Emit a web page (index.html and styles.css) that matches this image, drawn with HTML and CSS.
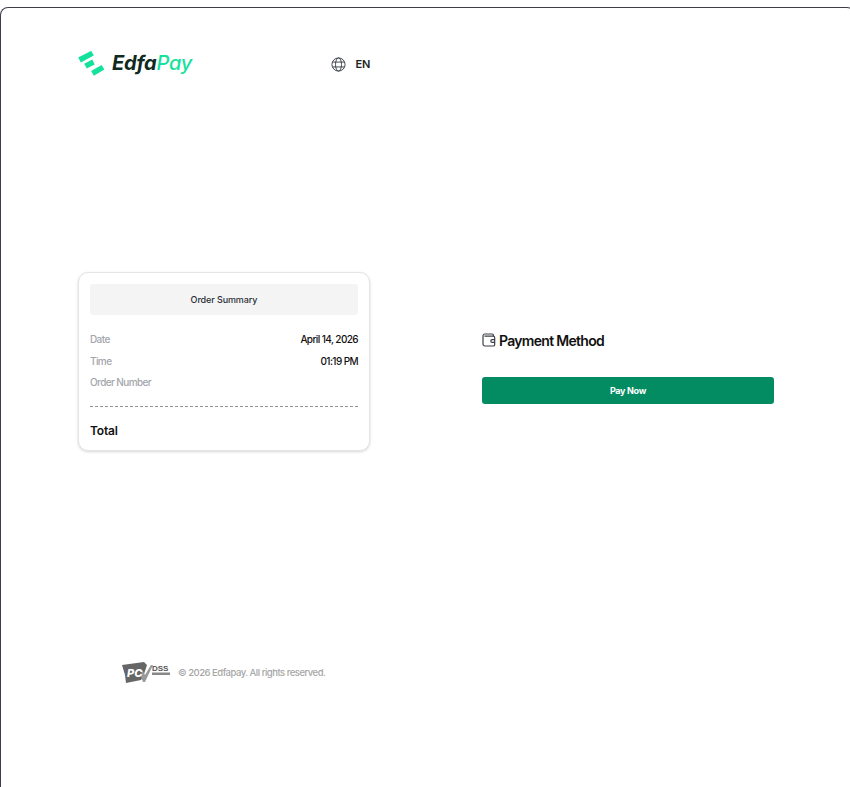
FILE: index.html
```html
<!DOCTYPE html>
<html lang="en">
<head>
	<meta charset="UTF-8">
	<title>EdfaPay Checkout</title>
	<link rel="stylesheet" href="styles.css">
</head>
<body>
	<div class="frame">
		<div class="side">
			<div class="top">
				<div class="logo">
					<svg class="logo-mark" width="28" height="26" viewBox="0 0 28 26" fill="none" stroke="#14e29c" stroke-width="5.4" stroke-linejoin="round">
						<path d="M1.5 9L14.5 2.2"/>
						<path d="M7.5 15.2L15.5 11"/>
						<path d="M14.5 22.4L25 16.2"/>
					</svg>
					<span class="logo-text"><span class="logo-edfa">Edfa</span><span class="logo-pay">Pay</span></span>
				</div>
				<div class="lang">
					<svg width="15" height="15" viewBox="0 0 16 16" fill="none" stroke="#3a3f47" stroke-width="1">
						<circle cx="8" cy="8" r="7"/>
						<ellipse cx="8" cy="8" rx="3.2" ry="7"/>
						<path d="M1.6 5.4h12.8M1.6 10.6h12.8"/>
					</svg>
					<span>EN</span>
				</div>
			</div>

			<div class="card">
				<div class="card-head">Order Summary</div>
				<div class="rows">
					<div class="row"><span class="label">Date</span><span class="value">April 14, 2026</span></div>
					<div class="row"><span class="label">Time</span><span class="value">01:19 PM</span></div>
					<div class="row"><span class="label">Order Number</span></div>
				</div>
				<div class="total">Total</div>
			</div>

			<div class="foot">
				<svg class="pci" width="49" height="21" viewBox="0 0 49 21">
					<path d="M0 3L22 0 25 3 21 15 19 18 4 21 3 13z" fill="#666"/>
					<path d="M18 12L21 9 23 13 29 3 31 3 23 20 21 20z" fill="#999"/>
					<text x="5" y="15" class="pci-text">PC</text>
					<text x="30" y="9" class="dss-text">DSS</text>
					<rect x="30" y="10.5" width="18" height="2.5" fill="#888"/>
				</svg>
				<span class="copy">© 2026 Edfapay. All rights reserved.</span>
			</div>
		</div>

		<div class="main">
			<div class="method">
				<svg width="14" height="14" viewBox="0 0 14 14" fill="none" stroke="#3a3f47" stroke-width="1.2">
					<path d="M11.5 3.2V2.4A1.4 1.4 0 0 0 10.1 1H2.6A1.7 1.7 0 0 0 1 2.7v8.4A1.9 1.9 0 0 0 2.9 13h8.2a1.6 1.6 0 0 0 1.6-1.6V4.8a1.6 1.6 0 0 0-1.6-1.6H2.4"/>
					<path d="M13 6.6H10.2a1.4 1.4 0 0 0 0 2.8H13"/>
				</svg>
				<span>Payment Method</span>
			</div>
			<button class="pay">Pay Now</button>
		</div>
	</div>
</body>
</html>
```

FILE: styles.css
```css
*{
	box-sizing: border-box;
}
html,body{
	margin: 0;
	padding: 0;
	height: 100%;
	background: #fff;
	overflow: hidden;
}
body{
	padding-top: 7px;
	font-family: Inter, "Liberation Sans", sans-serif;
}
.frame{
	display: flex;
	width: 855px;
	height: 780px;
	border: 1px solid #3c3f4a;
	border-bottom: none;
	border-radius: 8px 8px 0 0;
}
.side{
	display: flex;
	flex-direction: column;
	margin-left: 77px;
	width: 292px;
}
.top{
	display: flex;
	align-items: center;
	justify-content: space-between;
	margin-top: 43px;
	height: 26px;
}
.logo{
	display: flex;
	align-items: center;
	gap: 6px;
}
.logo-text{
	font-size: 20px;
	font-style: italic;
	letter-spacing: -0.2px;
	line-height: 22px;
	padding-bottom: 2px;
}
.logo-edfa{
	font-weight: 700;
	color: #0f2a20;
}
.logo-pay{
	font-weight: 500;
	color: #14e29c;
}
.lang{
	display: flex;
	align-items: center;
	gap: 10px;
	font-size: 11px;
	font-weight: 600;
	letter-spacing: -0.3px;
	color: #1c1f24;
}
.card{
	margin-top: 195px;
	height: 179px;
	padding: 11px 11px 0;
	background: #fff;
	border: 1px solid #e4e5e7;
	border-radius: 10px;
	box-shadow: 0 1px 3px rgba(0,0,0,.16);
}
.card-head{
	height: 31px;
	line-height: 31px;
	text-align: center;
	font-size: 9px;
	font-weight: 500;
	letter-spacing: -0.1px;
	color: #2b2f36;
	background: #f4f4f5;
	border-radius: 3px;
}
.rows{
	display: flex;
	flex-direction: column;
	gap: 7.5px;
	height: 75px;
	margin-top: 17px;
	border-bottom: 1px dashed #8f9297;
}
.row{
	display: flex;
	justify-content: space-between;
	height: 14px;
	line-height: 14px;
	font-size: 10px;
	letter-spacing: -0.6px;
}
.label{
	font-weight: 500;
	color: #a3a6ab;
}
.value{
	font-weight: 500;
	color: #111;
}
.total{
	margin-top: 16px;
	font-size: 12px;
	font-weight: 600;
	letter-spacing: -0.2px;
	color: #111;
}
.foot{
	display: flex;
	align-items: center;
	gap: 7px;
	margin-top: 211px;
	padding-left: 44px;
}
.pci-text{
	font: italic 800 11px Inter, sans-serif;
	fill: #fff;
}
.dss-text{
	font: 800 8px "Liberation Sans", sans-serif;
	fill: #555;
}
.copy{
	font-size: 9.5px;
	font-weight: 500;
	letter-spacing: -0.5px;
	color: #a6a6a6;
}
.main{
	width: 292px;
	margin-left: 112px;
	padding-top: 323px;
}
.method{
	display: flex;
	align-items: center;
	gap: 3px;
	height: 18px;
	font-size: 14px;
	font-weight: 600;
	letter-spacing: -0.7px;
	color: #111;
}
.pay{
	display: block;
	width: 100%;
	height: 27px;
	margin-top: 28px;
	border: none;
	border-radius: 3px;
	background: #038c61;
	color: #fff;
	font-family: inherit;
	font-size: 9px;
	font-weight: 700;
	letter-spacing: -0.3px;
}
```
